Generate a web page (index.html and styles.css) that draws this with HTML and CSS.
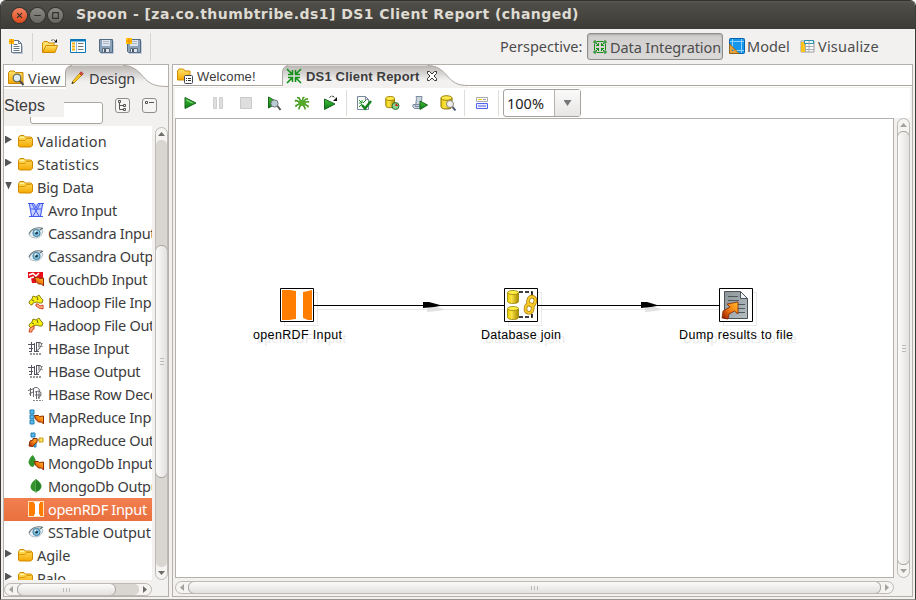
FILE: index.html
```html
<!DOCTYPE html>
<html lang="en">
<head>
<meta charset="utf-8">
<title>Spoon - [za.co.thumbtribe.ds1] DS1 Client Report (changed)</title>
<link rel="stylesheet" href="styles.css">
</head>
<body>
<svg class="sprite" width="0" height="0">
  <defs>
    <linearGradient id="gold" x1="0" y1="0" x2="0" y2="1"><stop offset="0" stop-color="#ffe36a"/><stop offset="1" stop-color="#f5a800"/></linearGradient>
    <linearGradient id="cyl" x1="0" y1="0" x2="1" y2="0"><stop offset="0" stop-color="#e8cb00"/><stop offset=".35" stop-color="#fbe445"/><stop offset="1" stop-color="#a88a00"/></linearGradient>
    <linearGradient id="green" x1="0" y1="0" x2="0" y2="1"><stop offset="0" stop-color="#49c23c"/><stop offset="1" stop-color="#067a14"/></linearGradient>
    <linearGradient id="fire" x1="1" y1="0" x2="0" y2="1"><stop offset="0" stop-color="#ffc02e"/><stop offset=".5" stop-color="#f47a10"/><stop offset="1" stop-color="#8e1500"/></linearGradient>
    <linearGradient id="sheet" x1="0" y1="0" x2="1" y2="1"><stop offset="0" stop-color="#8d9599"/><stop offset="1" stop-color="#b5bec3"/></linearGradient>
    <linearGradient id="tabfill" x1="0" y1="0" x2="0" y2="1"><stop offset="0" stop-color="#b9b6b3"/><stop offset=".7" stop-color="#f2f1f0"/></linearGradient>
  </defs>
  <symbol id="folder" viewBox="0 0 16 16"><path d="M1.500 4.500 3 2.500h4L8.500 4h5.500l1.500 1.500v7l-2 1.500h-11l-1-1z" fill="url(#gold)" stroke="#d08a00"/><path d="M2 7.500h6l1.500-2h5" fill="none" stroke="#e09a00"/><path d="M3 4.500h4" stroke="#fff4a8"/></symbol>
  <symbol id="new" viewBox="0 0 16 16"><path d="M5 4.500h6.500L15 8v8H5z" fill="#bcc5d4"/><path d="M3.500 2.500h7l3 3v9h-10z" fill="#fff" stroke="#66788c"/><path d="M10.500 2.500v3h3M5.500 6.500h4M5.500 8.500h6M5.500 10.500h6M5.500 12.500h6" fill="none" stroke="#66788c"/><path d="M1 1h5v5H1z" fill="#ffc400"/><path d="M3.500 1v5M1 3.500h5" stroke="#f28a00"/></symbol>
  <symbol id="open" viewBox="0 0 16 16"><path d="M.5 14V5L2 3.500h3.500L7 5h5v9z" fill="#ffe16a" stroke="#d08a00"/><path d="M.5 14.500 4 7.500h11.500L13 14.500z" fill="url(#gold)" stroke="#d08a00"/><path d="M9 2.500q2.500-2 4.500.5" fill="none" stroke="#777"/><path d="M15 1v3.500h-3z" fill="#111"/></symbol>
  <symbol id="explore" viewBox="0 0 16 16"><path d="M.5 1.500h15v13H.5z" fill="#fff" stroke="#0878b8"/><path d="M0 2.500h16" stroke="#0878b8" stroke-width="2"/><path d="M6.500 4v10" stroke="#8bbcd8"/><path d="M2 5.500h3M2 8.500h3M2 11.500h3" stroke="#f6ae00" stroke-width="2"/><path d="M8 5.500h5.500M8 8.500h5.500M8 11.500h5.500" stroke="#777"/></symbol>
  <symbol id="save" viewBox="0 0 16 16"><path d="M3 3h13v13H3z" fill="#c4cddb"/><path d="M1.500 1.500h13v13h-12l-1-1z" fill="#8ca2b8" stroke="#516a82"/><path d="M4 2h8v6H4z" fill="#dce5ed"/><path d="M5 3.500h6M5 5.500h6" stroke="#adb9c5"/><path d="M4.500 10.500h7v4h-7z" fill="#dfe5ea" stroke="#5d7082"/><path d="M6 11h2v3H6z" fill="#4c5c6e"/></symbol>
  <symbol id="saveas" viewBox="0 0 16 16"><use href="#save"/><path d="M0 0h6v6H0z" fill="#ffc400"/><path d="M3 0v6M0 3h6" stroke="#f28a00"/></symbol>
  <symbol id="integrate" viewBox="0 0 16 16"><g fill="none" stroke="#139018" stroke-width="1.600"><path d="m1 1 4.500 4.500M15 1l-4.500 4.500M1 15l4.500-4.500M15 15l-4.500-4.500M6.500 2v4.500H2M9.500 2v4.500H14M6.500 14V9.500H2M9.500 14V9.500H14"/></g></symbol>
  <symbol id="integrate-box" viewBox="0 0 16 16"><path d="M5 2.500h6M5 13.500h6M2.500 5v6M13.500 5v6" fill="none" stroke="#159018"/><path d="M2 2h2v2H2zM12 2h2v2h-2zM2 12h2v2H2zM12 12h2v2h-2z" fill="#fff" stroke="#0c7c13"/><path d="m4 4 3 3M12 4 9 7M4 12l3-3M12 12 9 9M6.500 4v2.500H4M9.500 4v2.500H12M6.500 12V9.500H4M9.500 12V9.500H12" fill="none" stroke="#159018"/></symbol>
  <symbol id="model" viewBox="0 0 16 16"><rect x=".5" y=".5" width="15" height="15" rx="1" fill="#1697ed" stroke="#0661a8"/><path d="M3.500 1v11M12.500 1v14M1 3.500h14M3 12.500h12" stroke="#8fd0fb"/><path d="M.5 6v9.500H10z" fill="#e7a23a" stroke="#94661d"/><path d="M3 11v2h2z" fill="#1586d8"/></symbol>
  <symbol id="visual" viewBox="0 0 16 16"><path d="M1 3h13v11H1z" fill="#fff" stroke="#999"/><path d="M1 4h4v10H1z" fill="#ffc41b"/><path d="M4.500 2.500h9v3h-9z" fill="#eaf8fd" stroke="#2b8db0"/><path d="M9 3v11M5.500 6v8M6 8.500h8M6 11.500h8" stroke="#a5adaf"/></symbol>
  <symbol id="view" viewBox="0 0 16 16"><path d="M.5 2.500 2 1h4l1.500 1.500H15v11H.5z" fill="url(#gold)" stroke="#c88900"/><circle cx="9" cy="8" r="3.800" fill="#dcecf0" stroke="#6b6b66" stroke-width="1.300"/><path d="m12 11 3.500 4" stroke="#4b4b4b" stroke-width="2"/></symbol>
  <symbol id="pencil" viewBox="0 0 16 16"><path d="m3.500 11.500 7-8 2 2-7.500 7.500-2 .5z" fill="#ffca1f" stroke="#b07c0a" stroke-width=".8"/><path d="m10.500 3.500 1.700-1.800 2 2L12.500 5.500z" fill="#e14a3c" stroke="#9f3025" stroke-width=".8"/><path d="m2.500 14 .8-2.500L5 13z" fill="#333"/></symbol>
  <symbol id="welcome" viewBox="0 0 16 16"><path d="M.5 3 2 1h4.500L8 3h5v9H.5z" fill="url(#gold)" stroke="#cf8e00"/><rect x="7.500" y="7.500" width="8" height="8" rx="1" fill="#fff" stroke="#445"/><path d="M9 10.500h1M11 10.500h3M9 12.500h1M11 12.500h3" stroke="#333"/></symbol>
  <symbol id="play" viewBox="0 0 16 16"><path d="m3 2.500 11 5.500-11 5.500z" fill="url(#green)" stroke="#17651c"/><path d="m4.500 5 6 3" stroke="#8edb85"/></symbol>
  <symbol id="pause" viewBox="0 0 16 16"><path d="M3.500 2.500h3v11h-3zM9.500 2.500h3v11h-3z" fill="#dedede" stroke="#cfcfcf"/></symbol>
  <symbol id="stop" viewBox="0 0 16 16"><path d="M2.500 2.500h11v11h-11z" fill="#dedede" stroke="#c9c9c9"/></symbol>
  <symbol id="preview" viewBox="0 0 16 16"><path d="M2.500 2v11L12 7.500z" fill="url(#green)" stroke="#17651c"/><circle cx="8.500" cy="8.500" r="3.600" fill="#b9cdd6" stroke="#777"/><path d="m11.500 11 3 4" stroke="#555" stroke-width="2"/></symbol>
  <symbol id="bug" viewBox="0 0 16 16"><g fill="none" stroke="#41991b" stroke-width="1.500"><path d="M8 8 5 3 3 2.500M8 8 2 5.500l-1 1M8 8l-6 2.500v1.500M8 8l-3 5v1.500M8 8l3 5v1.500M8 8l6 3v1.500M8 8l6-1.500 1 1M8 8l1-5 1.500-1M8 8l4-4h2"/></g><ellipse cx="8" cy="8" rx="4" ry="3" fill="#55a92b"/></symbol>
  <symbol id="replay" viewBox="0 0 16 16"><path d="m2.500 4 10.500 5-10.500 5.500z" fill="url(#green)" stroke="#17651c"/><path d="M7.500 2.500q3-3 5.500.5" fill="none" stroke="#111" stroke-dasharray="2 1"/><path d="M15 2v4h-4z" fill="#111"/></symbol>
  <symbol id="verify" viewBox="0 0 16 16"><path d="M1.500 1.500h8l3 3v10h-11z" fill="#fff" stroke="#77879b"/><path d="M9.500 1.500v3h3" fill="none" stroke="#77879b"/><path d="m3 5 3 3M10 5 7 8M3 12l3-3M3 8h3V5" stroke="#169320" fill="none"/><path d="m6 10 3 3.500L15 6" fill="none" stroke="#12821d" stroke-width="2.500"/></symbol>
  <symbol id="db" viewBox="0 0 16 16"><path d="M2 4v8q0 2.500 5 2.500T12 12V4" fill="url(#cyl)" stroke="#8b7200"/><ellipse cx="7" cy="4" rx="5" ry="2.300" fill="#ffe94a" stroke="#9a7f00"/></symbol>
  <symbol id="impact" viewBox="0 0 16 16"><use href="#db" x="0" y="0" width="14" height="14"/><circle cx="11.500" cy="11" r="3.500" fill="#8bcf8b" stroke="#277436"/><path d="M11.500 11V8l3 3z" fill="#d51a15"/></symbol>
  <symbol id="sql" viewBox="0 0 16 16"><path d="M4 1.500h6l-1 10H3.500l1-8zM1 9.500h7v4H2.500Q0 12 1 9.500" fill="#c9d4de" stroke="#7c8da0"/><path d="m8 6 7.500 4L8 14.500z" fill="url(#green)" stroke="#17651c"/></symbol>
  <symbol id="dbview" viewBox="0 0 16 16"><path d="M1 3v8.500q0 2.500 5.500 2.500t5.500-2.500V3" fill="url(#cyl)" stroke="#8b7200"/><ellipse cx="6.500" cy="3" rx="5.500" ry="2.300" fill="#ffe94a" stroke="#9a7f00"/><circle cx="10" cy="9" r="3.500" fill="#eee" stroke="#8d8778"/><path d="m12.500 12 3 3.500" stroke="#53647c" stroke-width="2"/></symbol>
  <symbol id="results" viewBox="0 0 16 16"><path d="M2.500 2.500h11v4h-11z" fill="#fff" stroke="#aaa"/><path d="M4 4.500h4" stroke="#f1c500"/><path d="M9 4.500h3" stroke="#999"/><path d="M2.500 8.500h11v5h-11z" fill="#eef0ff" stroke="#5260ee"/><path d="M4 11h8" stroke="#5260ee"/></symbol>
  <symbol id="avro" viewBox="0 0 16 16"><path d="M.5 1.500h15L13 14.500H3z" fill="#c9d2ff"/><path d="M0 1.500h6M10 1.500h6M1 14.500h14M1.500 2l2 12M14.500 2l-2 12M4 2l4 7-3 5M12 2 8 9l3 5M6 2l2 4 2-4M3 7h10" fill="none" stroke="#4058ee"/></symbol>
  <symbol id="eye" viewBox="0 0 16 16"><path d="M1 10Q3 4 9 4t6 2q-2 7-7 7-5 0-7-3" fill="#e4eff5" stroke="#b4c0c6"/><circle cx="8.500" cy="8" r="3.600" fill="#86c3e2" stroke="#3f7f9f"/><circle cx="8.500" cy="8" r="1.500" fill="#16394d"/><path d="M1 9Q4 1.500 14 3M12 5l3-2" fill="none" stroke="#66757c" stroke-width="1.100"/><circle cx="7.500" cy="6.500" r="1" fill="#fff"/></symbol>
  <symbol id="arrow" viewBox="0 0 16 16"><path d="M6.500 6.500h4l1 1 4-.5v8l-2-2h-3l-3-3z" fill="url(#fire)" stroke="#8d2d00"/></symbol>
  <symbol id="couch" viewBox="0 0 16 16"><path d="M0 1h15v7H9l-1 4H4L3 7H0z" fill="#e80d18"/><path d="M1 4 5 2.500l3 2.500 3-3M2 7l4-1" fill="none" stroke="#fff" stroke-width="1.600"/><use href="#arrow"/></symbol>
  <symbol id="elephant" viewBox="0 0 16 16"><path d="M1.500 7 4 5l1-3 3 1 3-2 2 3 2 2-1 3h-3l-2-1-4 1-1 2H3L1 9z" fill="#f6ed12" stroke="#8d8312"/><path d="m4 6 2 1M9 3l1 3" stroke="#6d6613"/></symbol>
  <symbol id="hadoopin" viewBox="0 0 16 16"><use href="#elephant"/><path d="M8 10h2l2 2 3-1v4l-4-1-3-2z" fill="#ffb38b" stroke="#d64922"/></symbol>
  <symbol id="hadoopout" viewBox="0 0 16 16"><use href="#elephant"/><path d="m1 15 1-4 4-2v3l-2 1v2z" fill="#ffb38b" stroke="#d64922"/></symbol>
  <symbol id="hbase" viewBox="0 0 16 16"><path d="M3.500 2v9M0 4.500h7M6.500 3v8M8.500 2v9M8 2.500h4q3 1 0 5-1 2-3 3M11 2.500v5M1 8.500h4M14 3v1M14 6v1M1 11.500h3M6 11.500h5" fill="none" stroke="#555562"/><path d="M2 14h12" stroke="#777" stroke-width="1.600" stroke-dasharray="2 1"/></symbol>
  <symbol id="hrow" viewBox="0 0 16 16"><path d="M2.500 2v8M0 4.500 5 3M5.500 2v9M8.500 5v8M11 6v7M6 2q4-2 6 3M7 6q5-2 6 1t-3 5M1 8l4-2M7 9h6" fill="none" stroke="#66666e"/><path d="M5 14.500h10" stroke="#888" stroke-dasharray="2 1"/></symbol>
  <symbol id="mapin" viewBox="0 0 16 16"><path d="M2 1h4v4H2zM2 6h4v4H2zM2 11h4v4H2z" fill="#56b8ee" stroke="#297eab"/><use href="#arrow"/></symbol>
  <symbol id="mapout" viewBox="0 0 16 16"><path d="M3 1h4v4H3zM6 11h2v4H6z" fill="#56b8ee" stroke="#297eab"/><path d="M8 8h3" stroke="#666"/><path d="M11 6h4v4h-4z" fill="#ffe15a" stroke="#d09a18"/><path d="m1 14 1-5 3-1V6.500h4v4l-2 1-2 3z" fill="url(#fire)" stroke="#8d2d00"/></symbol>
  <symbol id="leaf" viewBox="0 0 16 16"><path d="M8 1q6 4 5.500 8-1 4-5.500 5-5-1-5.500-5Q3 4 8 1z" fill="#33942e"/><path d="M8 1v14" stroke="#73b564"/><path d="M8 2q5 4 4.500 7T8 13z" fill="#237e26"/></symbol>
  <symbol id="mongoin" viewBox="0 0 16 16"><path d="M4.500 0q4 4 3 8-1 3-3 4-3-1-4-4 0-4 4-8z" fill="#33942e"/><use href="#arrow"/></symbol>
  <symbol id="rdf" viewBox="0 0 16 16"><path d="M0 0h16v16H0z" fill="#ffe0b8"/><path d="M1 1h6v14H1zM11 1h4v14h-4z" fill="#ff7d00"/><path d="M6 1h6v1l-1 1v10l1 1v1H6v-1l1-1V3L6 2z" fill="#fff"/></symbol>
</svg>

<div class="window">
  <header class="titlebar">
    <span class="ctl close"><svg viewBox="0 0 16 16"><path d="m5.500 5.500 5 5M10.500 5.500l-5 5"/></svg></span>
    <span class="ctl"><svg viewBox="0 0 16 16"><path d="M4.500 8h7"/></svg></span>
    <span class="ctl"><svg viewBox="0 0 16 16"><path d="M5 5h6v6H5z"/></svg></span>
    <h1>Spoon - [za.co.thumbtribe.ds1] DS1 Client Report (changed)</h1>
  </header>

  <div class="toolbar">
    <svg class="ic"><use href="#new"/></svg>
    <i class="sep first"></i>
    <svg class="ic"><use href="#open"/></svg>
    <svg class="ic"><use href="#explore"/></svg>
    <svg class="ic"><use href="#save"/></svg>
    <svg class="ic"><use href="#saveas"/></svg>
    <i class="sep last"></i>
    <div class="perspectives">
      <span class="plabel">Perspective:</span>
      <span class="pbtn active"><svg class="ic"><use href="#integrate-box"/></svg><span class="t-int">Data Integration</span></span>
      <span class="pbtn model"><svg class="ic"><use href="#model"/></svg><span>Model</span></span>
      <span class="pbtn visual"><svg class="ic"><use href="#visual"/></svg><span>Visualize</span></span>
    </div>
  </div>

  <div class="body">
    <aside class="side">
      <div class="tabs side-tabs">
        <svg class="tabshape" width="164" height="24" viewBox="0 0 164 24"><path d="M61.500 24V7Q62 1 68 .5h51c9 0 14 4 20 11 7 8 12 10 25 10V24z" fill="url(#tabfill)"/><path d="M0 21.500h61.500V7Q62 1 68 .5M119 .5c9 0 14 4 20 11 7 8 12 10 25 10" fill="none" stroke="#aaa69f"/></svg>
        <span class="tab view"><svg class="ic"><use href="#view"/></svg><span>View</span></span>
        <span class="tab design"><svg class="ic"><use href="#pencil"/></svg><span>Design</span></span>
      </div>
      <div class="steps">
        <div class="search"><span>Steps</span></div>
        <span class="sq expand"><svg viewBox="0 0 13 13"><path d="M2.500 1.500h2v2h-2zM3.500 4v6.500H7M3.500 6.500H7M7.500 5.500h2v2h-2zM7.500 9.500h2v2h-2z"/></svg></span>
        <span class="sq"><svg viewBox="0 0 13 13"><path d="M2.500 2.500h2v2h-2zM6 3.500h5"/></svg></span>
      </div>
      <div class="side-main">
        <ul class="tree">
          <li class="top wide"><i class="tri"></i><svg class="ic"><use href="#folder"/></svg><span>Validation</span></li>
          <li class="top wide"><i class="tri"></i><svg class="ic"><use href="#folder"/></svg><span>Statistics</span></li>
          <li class="top"><i class="tri down"></i><svg class="ic"><use href="#folder"/></svg><span>Big Data</span></li>
          <li><svg class="ic"><use href="#avro"/></svg><span>Avro Input</span></li>
          <li><svg class="ic"><use href="#eye"/></svg><span>Cassandra Input</span></li>
          <li><svg class="ic"><use href="#eye"/></svg><span>Cassandra Output</span></li>
          <li><svg class="ic"><use href="#couch"/></svg><span>CouchDb Input</span></li>
          <li><svg class="ic"><use href="#hadoopin"/></svg><span>Hadoop File Input</span></li>
          <li><svg class="ic"><use href="#hadoopout"/></svg><span>Hadoop File Output</span></li>
          <li><svg class="ic"><use href="#hbase"/></svg><span>HBase Input</span></li>
          <li><svg class="ic"><use href="#hbase"/></svg><span>HBase Output</span></li>
          <li><svg class="ic"><use href="#hrow"/></svg><span>HBase Row Decoder</span></li>
          <li><svg class="ic"><use href="#mapin"/></svg><span>MapReduce Input</span></li>
          <li><svg class="ic"><use href="#mapout"/></svg><span>MapReduce Output</span></li>
          <li><svg class="ic"><use href="#mongoin"/></svg><span>MongoDb Input</span></li>
          <li><svg class="ic"><use href="#leaf"/></svg><span>MongoDb Output</span></li>
          <li class="selected"><svg class="ic"><use href="#rdf"/></svg><span>openRDF Input</span></li>
          <li class="loose"><svg class="ic"><use href="#eye"/></svg><span>SSTable Output</span></li>
          <li class="top loose"><i class="tri"></i><svg class="ic"><use href="#folder"/></svg><span>Agile</span></li>
          <li class="top"><i class="tri"></i><svg class="ic"><use href="#folder"/></svg><span>Palo</span></li>
        </ul>
        <div class="vbar side-v"><i class="arr up"></i><div class="trough"><div class="thumb"><i class="grip"></i></div></div><i class="arr dn"></i></div>
        <div class="hbar side-h"><i class="arr lf"></i><div class="trough"><div class="thumb"><i class="grip"></i></div></div><i class="arr rt"></i></div>
      </div>
    </aside>

    <main class="editor">
      <div class="tabs">
        <svg class="tabshape" width="739" height="22" viewBox="0 0 739 22"><path d="M109.500 22V7q.5-6 6-6.500h139c9 0 14 4 19 9.500 6 7 10 10.500 22 10.500V22z" fill="url(#tabfill)"/><path d="M0 20.500h109.500V7q.5-6 6-6.500M254.500.5c9 0 14 4 19 9.500 6 7 10 10.500 22 10.500H739" fill="none" stroke="#aaa69f"/></svg>
        <span class="tab welcome"><svg class="ic"><use href="#welcome"/></svg><span>Welcome!</span></span>
        <span class="tab report"><svg class="ic"><use href="#integrate"/></svg><span>DS1 Client Report</span><svg class="x" viewBox="0 0 12 12"><path d="M1.500 1.500h2L6 4l2.500-2.500h2v2L8 6l2.500 2.500v2h-2L6 8l-2.500 2.500h-2v-2L4 6 1.500 3.500z"/></svg></span>
      </div>
      <div class="actions">
        <svg class="ic"><use href="#play"/></svg>
        <svg class="ic"><use href="#pause"/></svg>
        <svg class="ic"><use href="#stop"/></svg>
        <svg class="ic"><use href="#preview"/></svg>
        <svg class="ic"><use href="#bug"/></svg>
        <svg class="ic"><use href="#replay"/></svg>
        <i class="asep"></i>
        <svg class="ic"><use href="#verify"/></svg>
        <svg class="ic"><use href="#impact"/></svg>
        <svg class="ic"><use href="#sql"/></svg>
        <svg class="ic"><use href="#dbview"/></svg>
        <i class="asep"></i>
        <svg class="ic"><use href="#results"/></svg>
        <i class="asep"></i>
        <div class="combo"><span>100%</span><b><i></i></b></div>
      </div>
      <div class="work">
        <div class="canvas">
          <svg width="717" height="458" viewBox="176 119 717 458">
            <g class="shade">
              <path d="M318 309.500h190M542 309.500h181"/>
              <path d="M284.500 292.500h33v33h-33zM508.500 292.500h33v33h-33zM723.500 292.500h33v33h-33z"/>
              <path class="fill" d="M427 306h6l11 3v1l-6 1-11 1zM645 306h6l10 3v1l-6 1-10 1z"/>
              <text x="257" y="343" textLength="89">openRDF Input</text><text x="485" y="343" textLength="80">Database join</text><text x="683" y="343" textLength="114">Dump results to file</text>
            </g>
            <path d="M314 305.500h190M538 305.500h181" stroke="#000"/>
            <path d="M423 302h6l11 3v1l-6 1-11 1zM641 302h6l10 3v1l-6 1-10 1z" fill="#000"/>
            <g fill="#fff" stroke="#000"><path d="M280.500 288.500h33v33h-33zM504.500 288.500h33v33h-33zM719.500 288.500h33v33h-33z"/></g>
            <path d="M282 290h8l6 1v28l-7 1h-7zM303 292l5-1 4-1v30h-4l-5-2z" fill="#ff7d00"/>
            <g stroke="#9b8400" stroke-width=".8">
              <path d="M507.500 292.500v9q0 2 5.500 2t5.500-2v-9" fill="url(#cyl)"/><ellipse cx="513" cy="292.500" rx="5.500" ry="2" fill="#ffee48"/>
              <path d="M507.500 308.500v9q0 2 5.500 2t5.500-2v-9" fill="url(#cyl)"/><ellipse cx="513" cy="308.500" rx="5.500" ry="2" fill="#ffee48"/>
            </g>
            <path d="M519 292h13v4M519 317h13v-5" fill="none" stroke="#000" stroke-width="1.600" stroke-dasharray="4 2"/>
            <g fill="none" stroke="#a87900" stroke-width="3.600"><rect x="528" y="296.500" width="7" height="9" rx="3.500" transform="rotate(12 531 302)"/><rect x="525.500" y="304" width="7" height="9" rx="3.500" transform="rotate(12 530 309)"/></g>
            <g fill="none" stroke="#f6c92c" stroke-width="2.200"><rect x="528" y="296.500" width="7" height="9" rx="3.500" transform="rotate(12 531 302)"/><rect x="525.500" y="304" width="7" height="9" rx="3.500" transform="rotate(12 530 309)"/></g>
            <path d="M724.500 291.500h16l7 7v20h-23z" fill="url(#sheet)" stroke="#4b5255"/><path d="M740.500 291.500v7h7z" fill="#edf1f3" stroke="#4b5255"/>
            <path d="M728 296.500h10M728 300.500h11M730 304.500h15M734 308.500h11M736 312.500h9" stroke="#50585c"/>
            <path d="M738 302v12l-3.500-3-5.500 3-1 5-6-1 1-7 7-4-3-3z" fill="url(#fire)" stroke="#7d2400" stroke-width=".8"/>
            <g class="labels"><text x="253" y="339" textLength="89">openRDF Input</text><text x="481" y="339" textLength="80">Database join</text><text x="679" y="339" textLength="114">Dump results to file</text></g>
          </svg>
        </div>
        <div class="vbar main-v"><i class="arr up"></i><div class="trough"><div class="thumb"><i class="grip"></i></div></div><i class="arr dn"></i></div>
        <div class="hbar main-h"><i class="arr lf"></i><div class="trough"><div class="thumb"><i class="grip"></i></div></div><i class="arr rt"></i></div>
      </div>
    </main>
  </div>
</div>
</body>
</html>
```
FILE: styles.css
```css
* { box-sizing: border-box; }
body { margin: 0; background: #fff; font-family: "Noto Sans", "Open Sans", sans-serif; font-size: 14.5px; color: #3c3c3c; overflow: hidden; }
svg { display: block; flex: none; }
.sprite { position: absolute; }
.ic { width: 16px; height: 16px; }
.window { width: 916px; height: 600px; background: #f2f1f0; border: solid #3c3b37; border-width: 0 1px; border-bottom: 1px solid #98948f; border-radius: 6px 6px 0 0; overflow: hidden; display: flex; flex-direction: column; }

.titlebar { height: 29px; flex: none; display: flex; align-items: center; padding: 1px 0 0 11px; background: linear-gradient(#5b5a53 0, #4f4e48 2px, #3c3b37 100%); border-top: 1px solid #33322e; }
.ctl { width: 15px; height: 15px; margin-right: 3px; border-radius: 50%; background: linear-gradient(#8c8b84, #66655f); box-shadow: 0 0 0 1px #34332f; }
.ctl svg { width: 15px; height: 15px; fill: none; stroke: #33322e; stroke-width: 1.3; }
.ctl.close { background: linear-gradient(#f58463, #dc4a1c); }
.titlebar h1 { margin: -3px 0 0 10px; font: bold 14px "DejaVu Sans", sans-serif; letter-spacing: .45px; color: #dfdbd2; white-space: nowrap; }

.toolbar { height: 35px; flex: none; display: flex; align-items: center; padding: 0 0 2px 7px; gap: 12px; }
.sep { width: 1px; height: 28px; background: #d6d3d0; margin-top: 2px; }
.sep.first { margin-right: -3px; margin-left: -4px; }
.sep.last { margin-left: -4px; }
.perspectives { margin-left: auto; display: flex; align-items: center; color: #4c4c4c; padding-right: 36px; }
.plabel { width: 87px; }
.pbtn { display: flex; align-items: center; gap: 1px; white-space: nowrap; }
.pbtn.active { width: 136px; height: 27px; margin-top: 2px; padding: 0 0 0 4px; gap: 2px; border: 1px solid #8f8d8b; border-radius: 3px; background: linear-gradient(#cfcecd, #dbdad9); box-shadow: inset 0 1px 2px #aaa; }
.t-int { letter-spacing: -.1px; }
.pbtn.model { margin-left: 6px; width: 71px; gap: 2px; }
.pbtn.visual { width: 79px; }
.pbtn.visual span { letter-spacing: .2px; margin-left: 1px; }

.body { flex: 1; display: flex; gap: 3px; padding: 0 2px 2px 2px; min-height: 0; }
.side { width: 166px; border: 1px solid #b4b0ab; display: flex; flex-direction: column; }
.tabs { position: relative; display: flex; background: #fff; flex: none; }
.tabshape { position: absolute; left: 0; top: 0; }
.tab { position: relative; display: flex; align-items: center; }
.side-tabs { height: 24px; }
.view { width: 62px; padding: 2px 0 0 4px; gap: 4px; letter-spacing: .2px; }
.design { gap: 4px; padding: 2px 0 0 3px; letter-spacing: -.2px; }
.steps { height: 37px; flex: none; display: flex; align-items: center; }
.search { flex: none; width: 73px; height: 22px; margin: 10px 12px 0 26px; border: 1px solid #a9a6a2; border-radius: 3px; background: #fff; position: relative; }
.search span { position: absolute; left: -27px; top: -8px; width: 60px; height: 22px; line-height: 22px; background: #f2f1f0; font-family: "Liberation Sans", sans-serif; font-size: 16px; }
.sq { flex: none; width: 15px; height: 15px; border: 1px solid #8f8d8a; border-radius: 3px; background: #f6f5f4; margin: -4px 12px 0 0; }
.sq:last-child { margin-right: 0; }
.sq svg { width: 13px; height: 13px; fill: none; stroke: #555; }
.side-main { flex: 1; min-height: 0; display: grid; grid-template: 454px 16px / 148px 16px; }
.tree { list-style: none; margin: 0; padding: 4px 0 0; background: #fff; overflow: hidden; }
.tree li { height: 23px; display: flex; align-items: center; gap: 4px; padding: 0 0 1px 24px; white-space: nowrap; letter-spacing: -.3px; }
.tree li span { line-height: 20px; margin-top: -1px; }
.tree li.top { padding-left: 0; letter-spacing: -.15px; }
.tree li.top .ic { margin-left: 1px; }
.tree li.wide { letter-spacing: .2px; }
.tree li.loose { letter-spacing: -.1px; }
.tree li.selected { background: linear-gradient(#f27f4f, #e9703f); color: #fff; }
.tri { width: 7px; height: 8px; margin: -3px 0 0 1px; background: #555; clip-path: polygon(0 0, 100% 50%, 0 100%); }
.tri.down { clip-path: polygon(0 0, 100% 0, 50% 100%); }

.vbar, .hbar { display: flex; border: 1px solid #bdb9b4; border-radius: 7px; background: #f5f4f3; overflow: hidden; }
.vbar { flex-direction: column; width: 13px; }
.hbar { height: 13px; }
.arr { flex: none; width: 11px; height: 12px; background: #6f6c69; }
.main-v .arr, .main-h .arr { background: #a5a29e; }
.hbar .arr { width: 12px; height: 11px; }
.side-h .lf { background: #a5a29e; }
.up { clip-path: polygon(50% 4px, 9px 8px, 2px 8px); }
.dn { clip-path: polygon(2px 4px, 9px 4px, 50% 8px); }
.lf { clip-path: polygon(4px 50%, 8px 2px, 8px 9px); }
.rt { clip-path: polygon(4px 2px, 8px 50%, 4px 9px); }
.trough { flex: 1; background: #d9d6d2; display: flex; border-radius: 5px; }
.thumb { border: 1px solid #a9a5a0; border-radius: 6px; background: linear-gradient(90deg, #fbfbfa, #e3e1df); display: flex; align-items: center; justify-content: center; }
.vbar .thumb { margin: 0 -1px; width: 13px; }
.hbar .thumb { margin: -1px 0; height: 13px; background: linear-gradient(#fbfbfa, #e3e1df); }
.vbar .grip { width: 4px; height: 7px; background: repeating-linear-gradient(#bbb 0 1px, transparent 1px 3px); }
.hbar .grip { width: 7px; height: 4px; background: repeating-linear-gradient(90deg, #bbb 0 1px, transparent 1px 3px); }
.side-v { height: 453px; margin: 1px 0 0 3px; }
.side-v .trough { padding-top: 105px; flex-direction: column; }
.side-v .thumb { height: 233px; }
.side-h { margin-top: 3px; }
.side-h .thumb { width: 99px; }

.editor { width: 741px; height: 533px; border: 1px solid #b4b0ab; display: flex; flex-direction: column; }
.editor .tabs { height: 22px; font: 13px "Liberation Sans", sans-serif; }
.welcome { width: 110px; padding-left: 4px; gap: 4px; letter-spacing: .15px; }
.report { gap: 4px; font-weight: bold; padding-left: 3px; letter-spacing: .18px; }
.report .x { width: 12px; height: 12px; margin-left: 2px; fill: #fff; stroke: #333; }
.actions { height: 30px; flex: none; margin: 1px 2px 0; background: #fff; display: flex; align-items: center; gap: 12px; padding-left: 7px; }
.asep { width: 1px; height: 26px; background: #deddda; margin: 0 -3px 0 -4px; }
.combo { width: 78px; height: 28px; margin-left: -5px; display: flex; border: 1px solid #a5a29e; border-radius: 3px; color: #222; }
.combo span { width: 50px; padding-left: 3px; line-height: 26px; }
.combo b { flex: 1; border-left: 1px solid #b5b2ae; background: linear-gradient(#fbfafa, #e7e6e5); display: flex; align-items: center; justify-content: center; }
.combo b i { width: 8px; height: 6px; background: #777; clip-path: polygon(0 0, 100% 0, 50% 100%); }
.work { margin-left: 2px; display: grid; grid-template: 460px 18px / 719px 18px; }
.canvas { background: #fff; border: 1px solid #b4b0ab; }
.canvas text { font: 12.5px "Liberation Sans", sans-serif; }
.labels { fill: #000; }
.shade path { fill: none; stroke: #e9e9e9; }
.shade .fill { fill: #e2e2e2; stroke: none; }
.shade text { fill: #e8e8e8; }
.main-v { margin-left: 3px; height: 460px; }
.main-v .thumb { height: 100%; }
.main-h { margin-top: 3px; }
.main-h .thumb { width: 100%; }
```
